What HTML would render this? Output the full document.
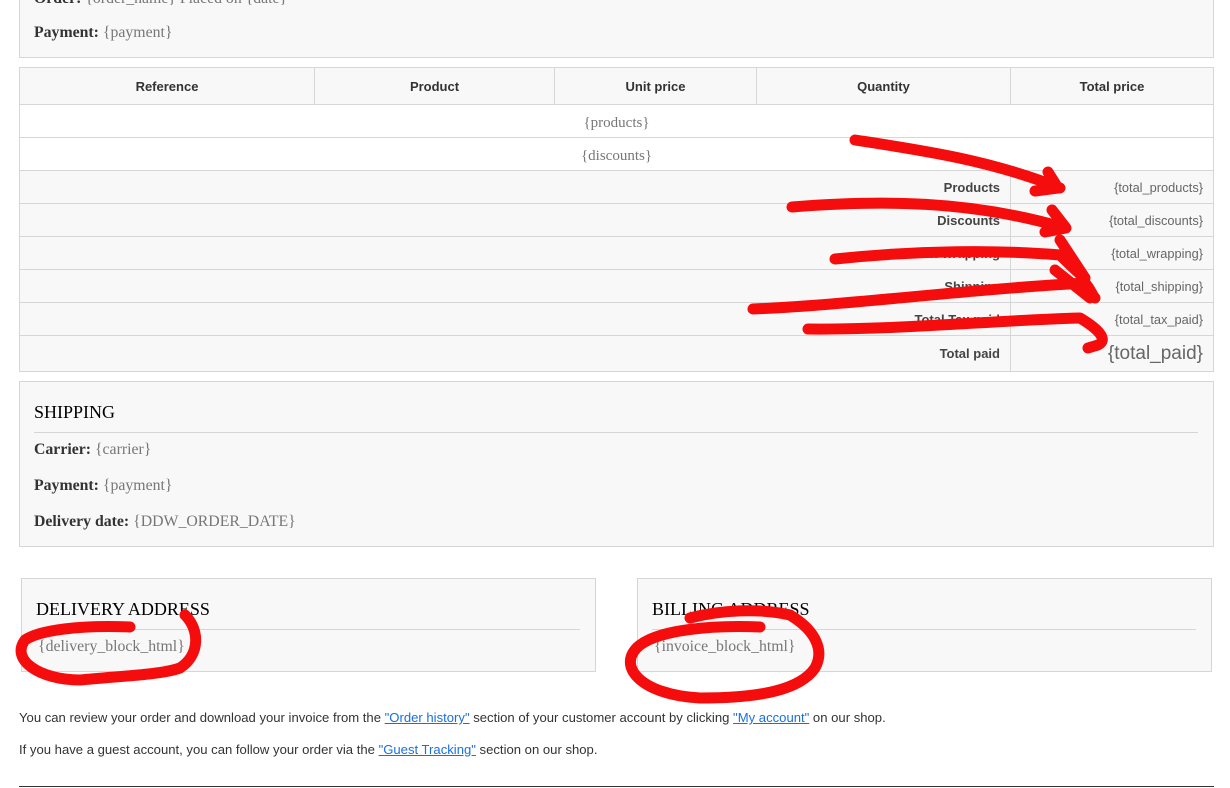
<!DOCTYPE html>
<html><head><meta charset="utf-8"><style>
body{margin:0;width:1230px;height:788px;background:#fff;position:relative;overflow:hidden;font-family:"Liberation Serif",serif;}
.box{position:absolute;background:#f8f8f8;border:1px solid #d6d6d6;box-sizing:border-box;}
.t{position:absolute;white-space:nowrap;font-size:15.8px;color:#333;}
.t b{color:#333}
.g{color:#777}
.s{font-family:"Liberation Sans",sans-serif;}
table{position:absolute;left:19px;top:67px;width:1195px;border-collapse:collapse;font-family:"Liberation Sans",sans-serif;font-size:13px;color:#333;}
td,th{border:1px solid #d6d6d6;padding:0 10px;}
th{height:36px;background:#f8f8f8;font-weight:bold;}
.w td{background:#fff;height:32px;text-align:center;font-family:"Liberation Serif",serif;color:#777;font-size:15px}
.w td span{position:relative;top:2px}
.r td{background:#f8f8f8;height:32px;text-align:right}
.r td.l{font-weight:bold;color:#444}
.r td.v{color:#666;font-size:12.8px}
.hd{position:absolute;font-size:18px;color:#000;}
.ln{position:absolute;height:1px;background:#d6d6d6}
a{color:#1a6fe0}
</style></head><body>
<div class="box" style="left:19px;top:-10px;width:1195px;height:68px"></div>
<div class="t" style="left:34px;top:-10px"><b>Order:</b> <span class="g">{order_name} Placed on {date}</span></div>
<div class="t" style="left:34px;top:24px"><b>Payment:</b> <span class="g">{payment}</span></div>
<table>
<tr><th style="width:274px">Reference</th><th style="width:219px">Product</th><th style="width:181px">Unit price</th><th style="width:233px">Quantity</th><th>Total price</th></tr>
<tr class="w"><td colspan="5"><span>{products}</span></td></tr>
<tr class="w"><td colspan="5"><span>{discounts}</span></td></tr>
<tr class="r"><td colspan="4" class="l">Products</td><td class="v">{total_products}</td></tr>
<tr class="r"><td colspan="4" class="l">Discounts</td><td class="v">{total_discounts}</td></tr>
<tr class="r"><td colspan="4" class="l">Gift-wrapping</td><td class="v">{total_wrapping}</td></tr>
<tr class="r"><td colspan="4" class="l">Shipping</td><td class="v">{total_shipping}</td></tr>
<tr class="r"><td colspan="4" class="l">Total Tax paid</td><td class="v">{total_tax_paid}</td></tr>
<tr class="r"><td colspan="4" class="l" style="height:35px">Total paid</td><td class="v" style="font-size:19px">{total_paid}</td></tr>
</table>
<div class="box" style="left:19px;top:381px;width:1195px;height:166px"></div>
<div class="hd" style="left:34px;top:402px">SHIPPING</div>
<div class="ln" style="left:34px;top:432px;width:1164px"></div>
<div class="t" style="left:34px;top:441px"><b>Carrier:</b> <span class="g">{carrier}</span></div>
<div class="t" style="left:34px;top:477px"><b>Payment:</b> <span class="g">{payment}</span></div>
<div class="t" style="left:34px;top:513px"><b>Delivery date:</b> <span class="g">{DDW_ORDER_DATE}</span></div>
<div class="box" style="left:21px;top:578px;width:575px;height:94px"></div>
<div class="hd" style="left:36px;top:599px">DELIVERY ADDRESS</div>
<div class="ln" style="left:36px;top:629px;width:544px"></div>
<div class="t g" style="left:38px;top:638px">{delivery_block_html}</div>
<div class="box" style="left:637px;top:578px;width:575px;height:94px"></div>
<div class="hd" style="left:652px;top:599px">BILLING ADDRESS</div>
<div class="ln" style="left:652px;top:629px;width:544px"></div>
<div class="t g" style="left:654px;top:638px">{invoice_block_html}</div>
<div class="t s" style="left:19px;top:710px;font-size:13.1px">You can review your order and download your invoice from the <a href="#">"Order history"</a> section of your customer account by clicking <a href="#">"My account"</a> on our shop.</div>
<div class="t s" style="left:19px;top:742px;font-size:13.1px">If you have a guest account, you can follow your order via the <a href="#">"Guest Tracking"</a> section on our shop.</div>
<div style="position:absolute;left:19px;top:786px;width:1195px;height:1px;background:#333"></div>
<svg width="1230" height="788" style="position:absolute;left:0;top:0" fill="none" stroke="#f50d0d" stroke-width="11" stroke-linecap="round" stroke-linejoin="round">
<path d="M855 140 C920 150 990 160 1060 188 M1048 172 L1058 188 L1035 191"/>
<path d="M792 207 C880 200 970 200 1065 228 M1052 210 L1066 228 L1045 232"/>
<path d="M835 259 C920 250 1000 250 1060 255 C1070 265 1080 275 1085 278 M1060 240 L1085 278"/>
<path d="M753 309 C850 305 960 290 1085 283 C1090 288 1092 295 1095 298 M1055 270 L1090 298"/>
<path d="M808 329 C900 330 1000 320 1080 318 C1100 330 1108 340 1098 345 L1088 348"/>
<path d="M130 627 C80 625 40 630 25 640 C10 660 40 680 80 680 C120 676 160 675 180 668 C200 655 200 630 185 615"/>
<path d="M760 627 C710 625 660 630 640 645 C615 665 640 695 700 698 C760 698 800 690 815 668 C825 650 815 630 790 615 C760 608 720 610 690 618"/>
</svg>
</body></html>
